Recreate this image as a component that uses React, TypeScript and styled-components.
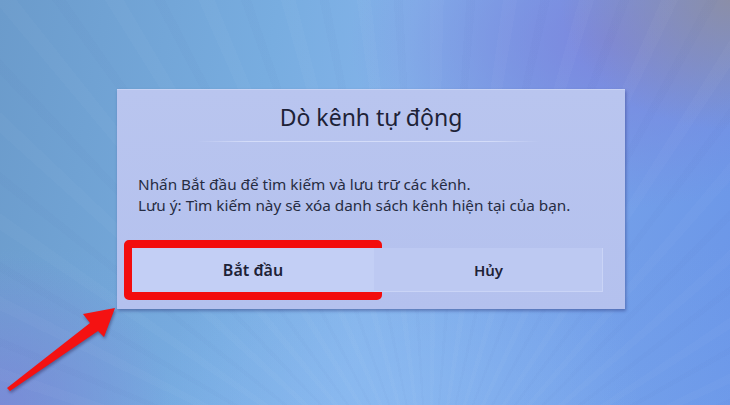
import React from "react"
import styled, { createGlobalStyle } from "styled-components"

const GlobalStyle = createGlobalStyle`
  html, body {
    margin: 0;
    padding: 0;
  }
  body {
    font-family: "Noto Sans", "Open Sans", sans-serif;
  }
`

const Screen = styled.div`
  position: relative;
  width: 730px;
  height: 405px;
  box-sizing: border-box;
  padding: 89px 0 0 117px;
  overflow: hidden;
  background:
    repeating-conic-gradient(
      from 0deg at 430px 520px,
      rgba(255, 255, 255, 0.025) 0deg 1.5deg,
      rgba(255, 255, 255, 0) 1.5deg 4deg,
      rgba(40, 60, 140, 0.02) 4deg 5deg,
      rgba(255, 255, 255, 0) 5deg 8deg
    ),
    radial-gradient(ellipse 240px 200px at 400px 400px, rgba(150, 195, 245, 0.5), rgba(150, 195, 245, 0) 100%),
    radial-gradient(ellipse 170px 130px at 730px 0px, rgba(140, 142, 165, 0.95), rgba(140, 142, 165, 0) 100%),
    radial-gradient(ellipse 260px 170px at 610px 40px, rgba(125, 130, 220, 0.85), rgba(125, 130, 220, 0) 100%),
    radial-gradient(ellipse 170px 150px at 0px 405px, rgba(125, 130, 215, 0.7), rgba(125, 130, 215, 0) 100%),
    linear-gradient(180deg, rgba(255, 255, 255, 0) 60%, rgba(120, 170, 240, 0.2) 100%),
    linear-gradient(100deg, #6b9bcb 0%, #78ade0 35%, #83b3ea 52%, #77a3e9 72%, #6b96e8 100%);
`

const Dialog = styled.div`
  width: 508px;
  height: 220px;
  display: flex;
  flex-direction: column;
  background: linear-gradient(180deg, #b9c5ef 0%, #b4c1ee 100%);
  border-top: 1px solid #c8d2f4;
  box-sizing: border-box;
  box-shadow: 1px 2px 3px rgba(40, 50, 120, 0.45);
  color: #1d2237;
`

const TitleBar = styled.div`
  height: 51px;
  display: flex;
  align-items: center;
  justify-content: center;
  font-size: 23px;
  font-weight: 400;
  padding-top: 2px;
  box-sizing: border-box;
`

const Divider = styled.div`
  height: 1px;
  margin: 0 85px 0 80px;
  background: linear-gradient(
    90deg,
    rgba(215, 223, 250, 0) 0%,
    rgba(215, 223, 250, 0.9) 15%,
    rgba(215, 223, 250, 0.9) 85%,
    rgba(215, 223, 250, 0) 100%
  );
`

const Message = styled.div`
  padding: 32px 0 0 21px;
  font-size: 15.3px;
  line-height: 21px;
  color: #262c42;
`

const ButtonRow = styled.div`
  margin-top: auto;
  padding: 0 22px 17px 15px;
  display: grid;
  grid-template-columns: 242px 1fr;
`

const Button = styled.button<{ focused?: boolean }>`
  position: relative;
  height: 44px;
  border: none;
  margin: 0;
  padding: 0;
  font-family: "Noto Sans", "Open Sans", sans-serif;
  font-size: ${(p) => (p.focused ? "16px" : "15px")};
  font-weight: 600;
  color: #1d2237;
  background: ${(p) => (p.focused ? "#c3cff5" : "#bdc9f2")};
  box-shadow: ${(p) => (p.focused ? "none" : "inset -1px -1px 0 #cad4f6")};
  cursor: pointer;

  ${(p) =>
    p.focused &&
    `
    &::after {
      content: "";
      position: absolute;
      inset: -8px;
      border: 8px solid #f20d0d;
      border-radius: 5px;
    }
  `}
`

const Pointer = styled.svg`
  position: absolute;
  left: 0;
  top: 0;
  pointer-events: none;
  filter: drop-shadow(1px 2px 1.5px rgba(40, 30, 80, 0.45));
`

export default function App() {
  return (
    <>
      <GlobalStyle />
      <Screen>
        <Dialog>
          <TitleBar>Dò kênh tự động</TitleBar>
          <Divider />
          <Message>
            Nhấn Bắt đầu để tìm kiếm và lưu trữ các kênh.
            <br />
            Lưu ý: Tìm kiếm này sẽ xóa danh sách kênh hiện tại của bạn.
          </Message>
          <ButtonRow>
            <Button focused>Bắt đầu</Button>
            <Button>Hủy</Button>
          </ButtonRow>
        </Dialog>
        <Pointer width="730" height="405" viewBox="0 0 730 405">
          <polygon
            points="115,308 83,314 90,323 7,388 10,391 98,331 104,337"
            fill="#f41212"
          />
        </Pointer>
      </Screen>
    </>
  )
}
